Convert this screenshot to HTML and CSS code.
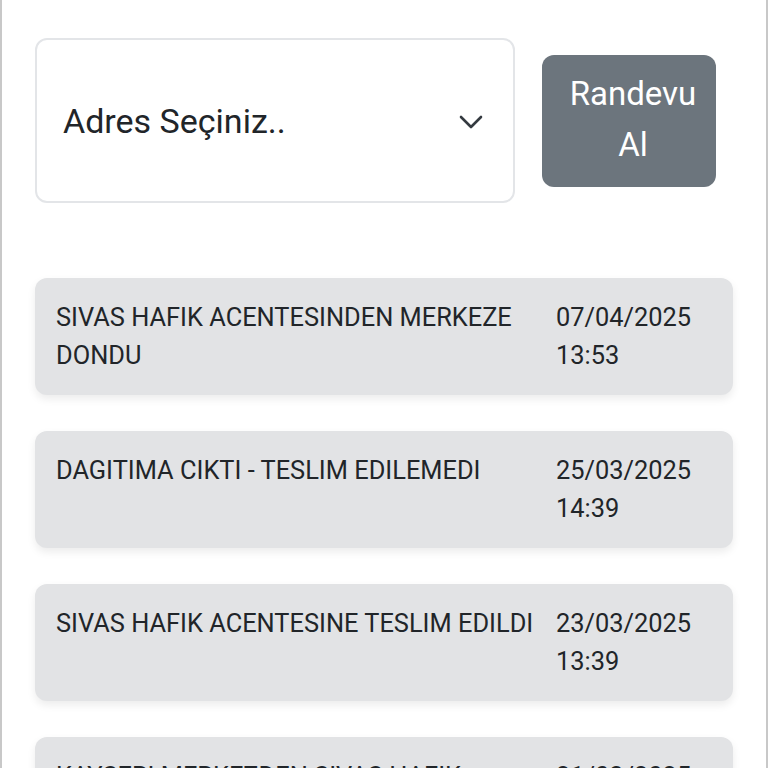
FILE: index.html
```html
<!DOCTYPE html>
<html lang="tr">

<head>
    <meta charset="UTF-8">
    <meta name="viewport" content="width=device-width, initial-scale=1.0">
    <title>Gönderi Takip</title>
    <link rel="stylesheet" href="styles.css">
</head>

<body>
    <div class="page">
        <div class="randevu-row">
            <div class="address-select">
                <span>Adres Seçiniz..</span>
                <svg class="chevron" width="24" height="16" viewBox="0 0 24 16">
                    <path d="M2 3 L12 13 L22 3" fill="none" stroke="#343a40" stroke-width="2.6" stroke-linecap="round" stroke-linejoin="round" />
                </svg>
            </div>
            <button class="btn-randevu">Randevu<br>Al</button>
        </div>

        <div class="history">
            <div class="history-item">
                <div class="history-title">SIVAS HAFIK ACENTESINDEN MERKEZE DONDU</div>
                <div class="history-date">07/04/2025 13:53</div>
            </div>
            <div class="history-item">
                <div class="history-title">DAGITIMA CIKTI - TESLIM EDILEMEDI</div>
                <div class="history-date">25/03/2025 14:39</div>
            </div>
            <div class="history-item">
                <div class="history-title">SIVAS HAFIK ACENTESINE TESLIM EDILDI</div>
                <div class="history-date">23/03/2025 13:39</div>
            </div>
            <div class="history-item">
                <div class="history-title">KAYSERI MERKEZDEN SIVAS HAFIK ACENTESINE CIKTI</div>
                <div class="history-date">21/03/2025 09:12</div>
            </div>
        </div>
    </div>
</body>

</html>
```

FILE: styles.css
```css
body {
    margin: 0;
    font-family: Roboto, "Liberation Sans", sans-serif;
    background-color: white;
    color: #212529;
}

.page {
    border-left: 2px solid #c8c8c8;
    border-right: 2px solid #c8c8c8;
    padding: 38px 33px 0 33px;
    height: 768px;
    overflow: hidden;
    box-sizing: border-box;
}

.randevu-row {
    display: flex;
    align-items: center;
    gap: 27px;
    padding-right: 17px;
}

.address-select {
    flex: 1;
    height: 165px;
    box-sizing: border-box;
    border: 2px solid #e3e5e8;
    border-radius: 12px;
    display: flex;
    align-items: center;
    justify-content: space-between;
    padding: 0 30px 0 26px;
    font-size: 34px;
}

.chevron {
    display: block;
    margin-top: 2px;
}

.btn-randevu {
    width: 174px;
    height: 132px;
    background-color: #6c757d;
    color: white;
    border: none;
    border-radius: 12px;
    font-family: inherit;
    font-size: 33px;
    line-height: 51px;
    padding: 0 0 4px 8px;
    cursor: pointer;
}

.history {
    margin-top: 75px;
    display: flex;
    flex-direction: column;
    gap: 36px;
}

.history-item {
    background-color: #e2e3e5;
    border-radius: 12px;
    box-shadow: 0 4px 8px rgba(0, 0, 0, 0.08);
    display: grid;
    grid-template-columns: 1fr 158px;
    gap: 14px;
    padding: 20px 19px 21px 21px;
    font-size: 25.4px;
    line-height: 38px;
    min-height: 117px;
    box-sizing: border-box;
}
```
